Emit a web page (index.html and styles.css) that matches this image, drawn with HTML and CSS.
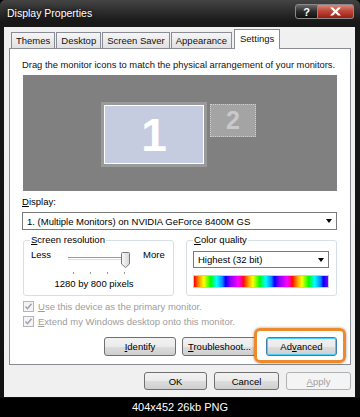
FILE: index.html
```html
<!DOCTYPE html>
<html lang="en">
<head>
    <meta charset="UTF-8">
    <title>Display Properties</title>
    <link rel="stylesheet" href="styles.css">
</head>
<body>
    <div class="window">
        <div class="titlebar">
            <span class="title">Display Properties</span>
            <div class="caption-buttons">
                <span class="cap-btn help">?</span>
                <span class="cap-btn close">
                    <svg width="13" height="9" viewBox="0 0 13 9"><path d="M1 0.5h3l2.5 2.6L9 0.5h3L8.2 4.5 12 8.5H9L6.5 5.9 4 8.5H1l3.8-4z" fill="#fff"/></svg>
                </span>
            </div>
        </div>
        <div class="client">
            <div class="tabs">
                <div class="tab">Themes</div>
                <div class="tab">Desktop</div>
                <div class="tab">Screen Saver</div>
                <div class="tab">Appearance</div>
                <div class="tab active">Settings</div>
            </div>
            <div class="panel">
                <p class="hint">Drag the monitor icons to match the physical arrangement of your monitors.</p>
                <div class="monitors">
                    <div class="monitor primary"><span>1</span></div>
                    <div class="monitor secondary"><span>2</span></div>
                </div>
                <div class="field-label"><u>D</u>isplay:</div>
                <div class="select wide">
                    <span>1. (Multiple Monitors) on NVIDIA GeForce 8400M GS</span>
                    <i class="arrow"></i>
                </div>
                <div class="groups">
                    <fieldset class="group">
                        <legend><u>S</u>creen resolution</legend>
                        <div class="slider-row">
                            <span>Less</span>
                            <div class="slider">
                                <div class="track"></div>
                                <svg class="thumb" width="9" height="16" viewBox="0 0 9 16">
                                    <defs>
                                        <linearGradient id="tg" x1="0" x2="1">
                                            <stop offset="0" stop-color="#fafafa"/>
                                            <stop offset="1" stop-color="#d6d6d6"/>
                                        </linearGradient>
                                    </defs>
                                    <path d="M0.5 1.5a1 1 0 0 1 1-1h6a1 1 0 0 1 1 1v10.5L4.5 15.5 0.5 12z" fill="url(#tg)" stroke="#7a7a7a"/>
                                </svg>
                                <div class="ticks"><i></i><i></i><i></i><i></i></div>
                            </div>
                            <span>More</span>
                        </div>
                        <div class="resolution">1280 by 800 pixels</div>
                    </fieldset>
                    <fieldset class="group">
                        <legend><u>C</u>olor quality</legend>
                        <div class="select">
                            <span>Highest (32 bit)</span>
                            <i class="arrow"></i>
                        </div>
                        <div class="spectrum"></div>
                    </fieldset>
                </div>
                <div class="checks">
                    <div class="check">
                        <svg width="11" height="11" viewBox="0 0 11 11"><rect x="0.5" y="0.5" width="10" height="10" fill="#f4f4f4" stroke="#b5b5b5"/><path d="M2.5 5.5l2 2.2 4-5" fill="none" stroke="#9aa3ad" stroke-width="1.5"/></svg>
                        <span><u>U</u>se this device as the primary monitor.</span>
                    </div>
                    <div class="check">
                        <svg width="11" height="11" viewBox="0 0 11 11"><rect x="0.5" y="0.5" width="10" height="10" fill="#f4f4f4" stroke="#b5b5b5"/><path d="M2.5 5.5l2 2.2 4-5" fill="none" stroke="#9aa3ad" stroke-width="1.5"/></svg>
                        <span><u>E</u>xtend my Windows desktop onto this monitor.</span>
                    </div>
                </div>
                <div class="panel-buttons">
                    <button class="btn identify"><u>I</u>dentify</button>
                    <button class="btn trouble"><u>T</u>roubleshoot...</button>
                    <button class="btn advanced">Ad<u>v</u>anced</button>
                    <div class="highlight"></div>
                </div>
            </div>
            <div class="dialog-buttons">
                <button class="btn">OK</button>
                <button class="btn">Cancel</button>
                <button class="btn disabled"><u>A</u>pply</button>
            </div>
        </div>
    </div>
    <div class="caption">404x452 26kb PNG</div>
</body>
</html>
```

FILE: styles.css
```css
body {
    margin: 0;
    background-color: #000;
    font-family: "Liberation Sans", Arial, sans-serif;
    font-size: 9.5px;
    color: #000;
}
.window {
    width: 360px;
    height: 398px;
    display: flex;
    flex-direction: column;
    background: linear-gradient(#444, #181818 22px, #111);
    border-radius: 5px 5px 0 0;
}
.titlebar {
    height: 27px;
    display: flex;
    align-items: flex-start;
}
.title {
    padding: 7px 0 0 7px;
    color: #fff;
    font-size: 10.5px;
    text-shadow: 0 0 4px #000;
}
.caption-buttons {
    margin: 4px 6px 0 auto;
    display: flex;
}
.cap-btn {
    height: 13px;
    border: 1px solid #8a8a8a;
    display: flex;
    align-items: center;
    justify-content: center;
}
.help {
    width: 21px;
    border-radius: 3px 0 0 3px;
    background: linear-gradient(#6a6a6a, #2b2b2b 50%, #111);
    color: #fff;
    font-weight: bold;
    font-size: 11px;
}
.close {
    width: 35px;
    border-left: none;
    border-radius: 0 3px 3px 0;
    background: linear-gradient(#d88a7c, #c0483a 45%, #9a1e12);
}
.client {
    flex: 1;
    margin: 0 5px 1px 4px;
    background-color: #f0f0f0;
    padding: 3px 4px 0 5px;
}
.tabs {
    display: flex;
    align-items: flex-end;
    height: 18px;
    padding-left: 2px;
    gap: 1px;
}
.tab {
    height: 15px;
    line-height: 15px;
    padding: 0 4px;
    border: 1px solid #898c95;
    border-bottom: none;
    background: linear-gradient(#f5f5f5, #e1e1e1);
    color: #111;
}
.tab.active {
    height: 19px;
    line-height: 17px;
    margin-bottom: -1px;
    margin-left: 1px;
    padding: 0 5px;
    background: #fff;
    position: relative;
}
.panel {
    height: 315px;
    border: 1px solid #898c95;
    background-color: #fff;
    padding: 0 13px;
}
.hint {
    margin: 10px 0 0 -1px;
    line-height: 12px;
    font-size: 9.4px;
    white-space: nowrap;
    color: #111;
}
.monitors {
    margin-top: 4px;
    height: 116px;
    background-color: #808080;
    position: relative;
}
.monitor {
    position: absolute;
    display: flex;
    align-items: center;
    justify-content: center;
    font-weight: bold;
    box-sizing: border-box;
}
.monitor.primary {
    left: 81px;
    top: 30px;
    width: 100px;
    height: 59px;
    background-color: #c6cce0;
    border: 1px solid #fff;
    outline: 3px solid #9a9a9a;
    color: #fff;
    font-size: 46px;
}
.monitor.secondary {
    left: 187px;
    top: 29px;
    width: 46px;
    height: 33px;
    background-color: #a4a4a4;
    border: 1px dotted #cfcfcf;
    color: #c9c9c9;
    font-size: 25px;
}
.field-label {
    margin: 5px 0 0 -1px;
    line-height: 12px;
}
.select {
    height: 15px;
    border: 1px solid #7a7a7a;
    background-color: #fff;
    display: flex;
    align-items: center;
    padding: 0 4px;
}
.select.wide {
    margin: 4px 0 0 -1px;
    height: 16px;
}
.arrow {
    margin-left: auto;
    width: 0;
    height: 0;
    border-left: 3.5px solid transparent;
    border-right: 3.5px solid transparent;
    border-top: 4px solid #000;
}
.groups {
    margin-top: 4px;
    display: flex;
    gap: 12px;
}
.group {
    flex: 1;
    margin: 0;
    height: 62px;
    box-sizing: border-box;
    border: 1px solid #d5dfe5;
    border-radius: 3px;
    padding: 0 7px 0 6px;
    min-width: 0;
}
.group legend {
    padding: 0 1px;
    line-height: 12px;
}
.slider-row {
    display: flex;
    align-items: flex-start;
    line-height: 12px;
    padding-left: 1px;
    margin-top: 3px;
}
.slider {
    position: relative;
    width: 60px;
    height: 26px;
    margin: 0 15px 0 17px;
}
.track {
    margin-top: 8px;
    height: 1px;
    background-color: #9a9a9a;
    border-bottom: 1px solid #fff;
    box-shadow: 0 1px 0 #ddd;
}
.thumb {
    position: absolute;
    left: 53px;
    top: 3px;
}
.ticks {
    display: flex;
    justify-content: space-between;
    margin: 13px 3px 0 5px;
}
.ticks i {
    width: 1px;
    height: 2px;
    background-color: #999;
}
.resolution {
    text-align: center;
    line-height: 12px;
    margin-top: 3px;
    padding-right: 8px;
}
.group .select {
    margin-top: 5px;
}
.spectrum {
    margin-top: 7px;
    height: 13px;
    border: 1px solid #ccc;
    box-sizing: border-box;
    background: linear-gradient(to right, #f00 0%, #fa0 12%, #ff0 20%, #0f0 34%, #0ff 46%, #08f 58%, #00f 64%, #80f 74%, #f0f 90%, #f04 100%);
    background-size: 49px 100%;
}
.checks {
    margin-top: 3px;
}
.check {
    display: flex;
    align-items: center;
    gap: 4px;
    height: 15px;
    color: #9d9d9d;
}
.panel-buttons {
    display: flex;
    justify-content: flex-end;
    margin-top: 8px;
    position: relative;
}
.btn {
    height: 19px;
    padding: 0;
    font-family: inherit;
    font-size: 9.5px;
    color: #000;
    border: 1px solid #707070;
    border-radius: 3px;
    background: linear-gradient(#f2f2f2 0%, #ebebeb 50%, #dddddd 51%, #cfcfcf 100%);
}
.identify {
    width: 72px;
}
.trouble {
    width: 75px;
    margin-left: 6px;
}
.advanced {
    width: 71px;
    margin-left: 9px;
    border-color: #3c7fb1;
    box-shadow: inset 0 0 0 1px #48d0f8;
}
.highlight {
    position: absolute;
    right: -9px;
    top: -9px;
    width: 86px;
    height: 29px;
    border: 3px solid #ef8a2c;
    border-radius: 6px;
    box-shadow: 0 0 3px rgba(0,0,0,0.4);
}
.dialog-buttons {
    display: flex;
    justify-content: flex-end;
    gap: 7px;
    margin-top: 7px;
}
.dialog-buttons .btn {
    width: 65px;
    height: 18px;
}
.dialog-buttons .btn:first-child {
    width: 63px;
}
.btn.disabled {
    color: #a0a0a0;
    border-color: #adb2b5;
    background: #f4f4f4;
}
.caption {
    height: 19px;
    line-height: 19px;
    text-align: center;
    color: #fff;
    font-size: 11px;
}
```
